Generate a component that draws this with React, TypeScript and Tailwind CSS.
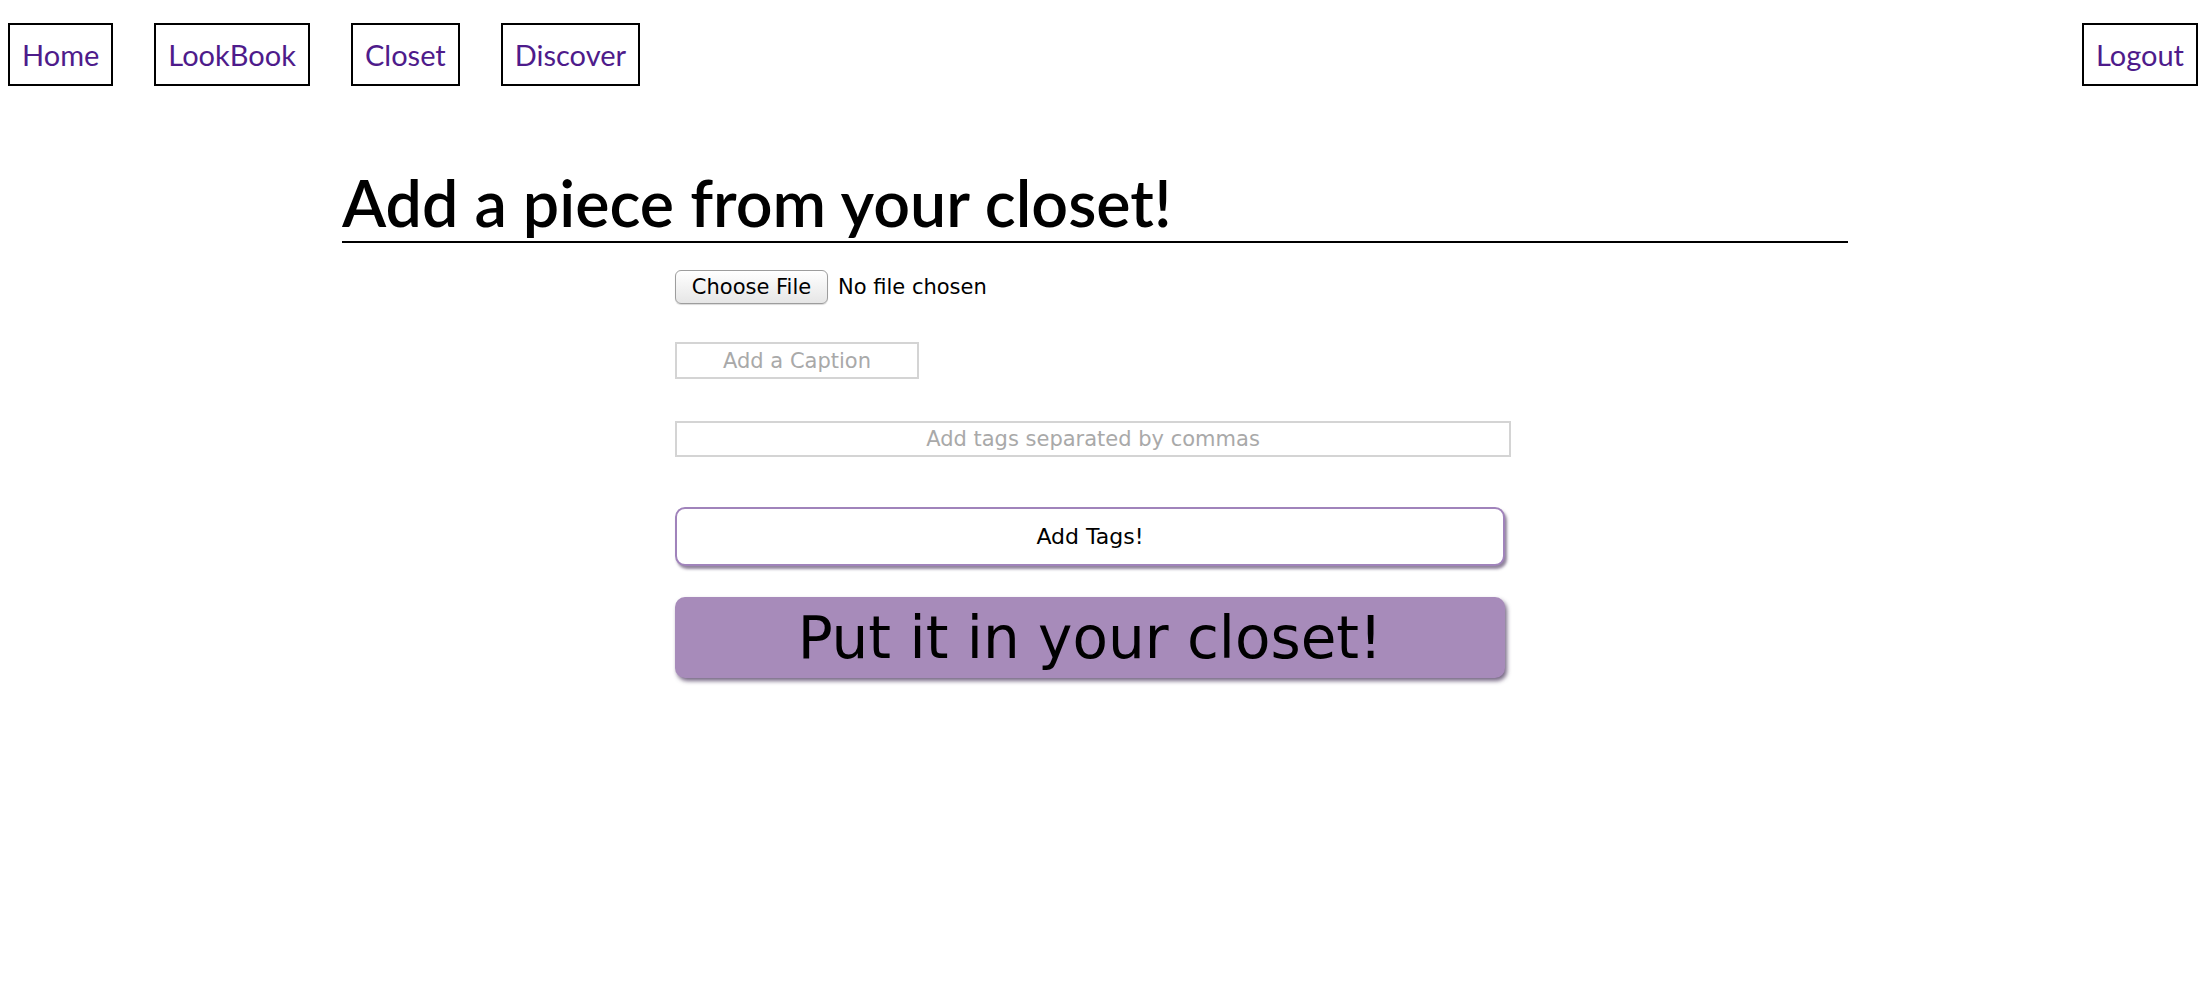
import { useState } from 'react'

const NAV_LINKS = ['Home', 'LookBook', 'Closet', 'Discover']

const navBox =
  'flex items-center h-[63px] px-[12px] border-2 border-black text-[29px] text-[#4e1b8b] font-["Lato",sans-serif] leading-none'

const App = () => {
  const [caption, setCaption] = useState('')
  const [tags, setTags] = useState('')

  return (
    <div className="min-h-[984px] w-full bg-white font-['DejaVu_Sans',sans-serif] text-black">
      {/* Top nav */}
      <nav className="flex items-start justify-between pt-[23px] pl-[8px] pr-[14px]">
        <div className="flex gap-[41px]">
          {NAV_LINKS.map(link => (
            <a key={link} href="#" className={navBox}>
              {link}
            </a>
          ))}
        </div>
        <a href="#" className={navBox}>Logout</a>
      </nav>

      {/* Title */}
      <h1 className="ml-[342px] mt-[80px] w-[1506px] border-b-2 border-black pb-[3px] font-['Lato',sans-serif] text-[64.5px] font-semibold leading-[72px]">
        Add a piece from your closet!
      </h1>

      {/* Form */}
      <form className="ml-[675px] mt-[27px] flex flex-col items-start" onSubmit={e => e.preventDefault()}>
        <div className="flex items-center gap-[10px] h-[34px]">
          <button
            type="button"
            className="h-[34px] w-[153px] rounded-[6px] border border-[#9d9d9d] bg-gradient-to-b from-white to-[#e6e6e6] text-[21px] leading-none shadow-[0_1px_1px_rgba(0,0,0,0.15)]"
          >
            Choose File
          </button>
          <span className="text-[21px] leading-none">No file chosen</span>
        </div>

        <input
          value={caption}
          onChange={e => setCaption(e.target.value)}
          placeholder="Add a Caption"
          className="mt-[38px] h-[37px] w-[244px] border-2 border-[#d4d4d4] text-center text-[21px] outline-none placeholder:text-[#a9a9a9]"
        />

        <input
          value={tags}
          onChange={e => setTags(e.target.value)}
          placeholder="Add tags separated by commas"
          className="mt-[42px] h-[36px] w-[836px] border-2 border-[#d4d4d4] text-center text-[21px] outline-none placeholder:text-[#a9a9a9]"
        />

        <button
          type="button"
          className="mt-[50px] h-[59px] w-[830px] rounded-[10px] border-2 border-[#a083bb] bg-white text-[22px] shadow-[2px_3px_3px_rgba(70,50,90,0.6)]"
        >
          Add Tags!
        </button>

        <button
          type="submit"
          className="mt-[31px] h-[81px] w-[830px] rounded-[10px] bg-[#a78bba] text-[58px] leading-none shadow-[2px_3px_4px_rgba(60,40,80,0.7)]"
        >
          Put it in your closet!
        </button>
      </form>
    </div>
  )
}

export default App
